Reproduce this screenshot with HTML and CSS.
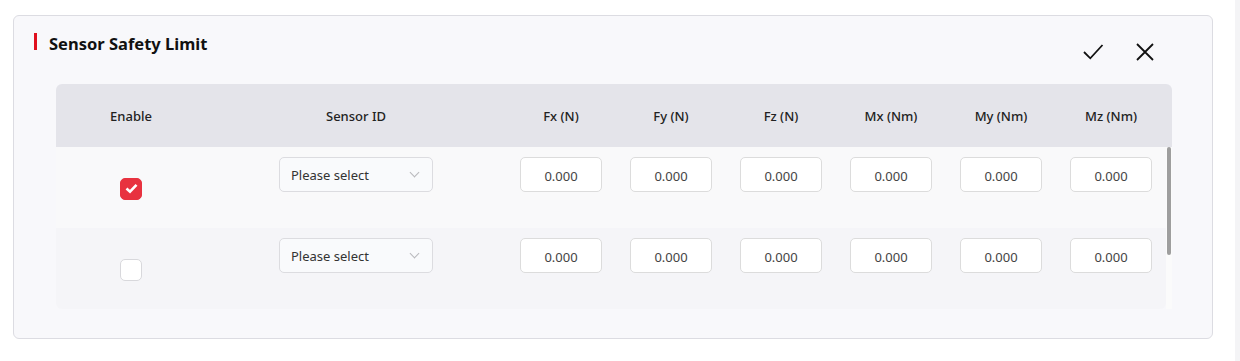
FILE: index.html
```html
<!DOCTYPE html>
<html>
<head>
  <meta charset="UTF-8">
  <title>Sensor Safety Limit</title>
  <link rel="stylesheet" href="styles.css">
</head>
<body>
  <div class="page">
    <div class="panel">
      <div class="panel-head">
        <h2 class="title">Sensor Safety Limit</h2>
        <div class="actions">
          <button class="icon-btn" title="Save">
            <svg width="22" height="22" viewBox="0 0 22 22"><path d="M2 11 L8.3 17.3 L20.5 4" fill="none" stroke="#111" stroke-width="1.8"/></svg>
          </button>
          <button class="icon-btn" title="Cancel">
            <svg width="22" height="22" viewBox="0 0 22 22"><path d="M3 3 L19 19 M19 3 L3 19" fill="none" stroke="#111" stroke-width="1.8"/></svg>
          </button>
        </div>
      </div>

      <div class="table">
        <div class="thead">
          <div class="th">Enable</div>
          <div class="th">Sensor ID</div>
          <div class="th">Fx (N)</div>
          <div class="th">Fy (N)</div>
          <div class="th">Fz (N)</div>
          <div class="th">Mx (Nm)</div>
          <div class="th">My (Nm)</div>
          <div class="th">Mz (Nm)</div>
        </div>
        <div class="tbody">
          <div class="rows">
            <div class="row">
              <div class="td td-check"><span class="check on"><svg width="13" height="11" viewBox="0 0 13 11"><path d="M1.5 5.5 L5 8.7 L11.5 1.8" fill="none" stroke="#fff" stroke-width="2.6"/></svg></span></div>
              <div class="td"><div class="select">Please select<span class="chev"></span></div></div>
              <div class="td"><input class="num" value="0.000"></div>
              <div class="td"><input class="num" value="0.000"></div>
              <div class="td"><input class="num" value="0.000"></div>
              <div class="td"><input class="num" value="0.000"></div>
              <div class="td"><input class="num" value="0.000"></div>
              <div class="td"><input class="num" value="0.000"></div>
            </div>
            <div class="row alt">
              <div class="td td-check"><span class="check"></span></div>
              <div class="td"><div class="select">Please select<span class="chev"></span></div></div>
              <div class="td"><input class="num" value="0.000"></div>
              <div class="td"><input class="num" value="0.000"></div>
              <div class="td"><input class="num" value="0.000"></div>
              <div class="td"><input class="num" value="0.000"></div>
              <div class="td"><input class="num" value="0.000"></div>
              <div class="td"><input class="num" value="0.000"></div>
            </div>
          </div>
          <div class="scroll"><div class="thumb"></div></div>
        </div>
      </div>
    </div>
    <div class="side"></div>
  </div>
</body>
</html>
```

FILE: styles.css
```css
body {
  margin: 0;
  background: #fff;
  font-family: 'Noto Sans', 'Open Sans', sans-serif;
  color: #222;
}
.page {
  display: flex;
  height: 361px;
}
.panel {
  margin: 15px 0 0 13px;
  width: 1198px;
  height: 322px;
  border: 1px solid #dcdce2;
  border-radius: 6px;
  background: #f8f8fb;
}
.side {
  margin-left: 22px;
  width: 5px;
  background: #f4f4f6;
}
.panel-head {
  display: flex;
  justify-content: space-between;
  padding: 17px 56px 0 20px;
  height: 51px;
}
.title {
  margin: 0;
  height: 17px;
  padding-left: 12px;
  border-left: 3px solid #e0101e;
  font-size: 16.5px;
  font-weight: bold;
  line-height: 21px;
  color: #111;
}
.actions {
  display: flex;
  gap: 30px;
  padding-top: 8px;
}
.icon-btn {
  padding: 0;
  border: none;
  background: none;
  width: 22px;
  height: 22px;
  cursor: pointer;
}
.table {
  margin-left: 42px;
  width: 1116px;
}
.thead {
  display: grid;
  grid-template-columns: 150px 300px repeat(6, 110px) 6px;
  height: 63px;
  background: #e4e4ea;
  border-radius: 6px 6px 0 0;
}
.th {
  display: flex;
  align-items: center;
  justify-content: center;
  font-size: 13px;
  font-weight: 500;
  color: #222;
}
.tbody {
  display: flex;
}
.rows {
  width: 1110px;
}
.row {
  display: grid;
  grid-template-columns: 150px 300px repeat(6, 110px);
  height: 81px;
  background: #f9f9fa;
}
.row.alt {
  background: #f5f5f8;
  border-radius: 0 0 6px 6px;
}
.td {
  display: flex;
  justify-content: center;
  padding-top: 10px;
}
.td-check {
  padding-top: 0;
  align-items: center;
}
.check {
  display: flex;
  align-items: center;
  justify-content: center;
  width: 20px;
  height: 20px;
  margin-top: 2px;
  border: 1px solid #d8d8dc;
  border-radius: 5px;
  background: #fff;
}
.check.on {
  border-color: #e8323f;
  background: #e8323f;
}
.select {
  position: relative;
  box-sizing: border-box;
  width: 154px;
  height: 35px;
  padding: 1px 11px 0;
  border: 1px solid #dcdce0;
  border-radius: 5px;
  background: #f9fafc;
  font-size: 13px;
  line-height: 33px;
  color: #333;
}
.chev {
  position: absolute;
  right: 14px;
  top: 11px;
  width: 6px;
  height: 6px;
  border-right: 1px solid #b8b8bc;
  border-bottom: 1px solid #b8b8bc;
  transform: rotate(45deg);
}
.num {
  box-sizing: border-box;
  width: 82px;
  height: 35px;
  margin: 0;
  padding: 3px 0 0;
  border: 1px solid #dcdcdc;
  border-radius: 5px;
  background: #fff;
  font-family: 'Noto Sans', 'Open Sans', sans-serif;
  font-size: 13px;
  color: #444;
  text-align: center;
  outline: none;
}
.scroll {
  width: 6px;
  height: 162px;
  background: #fbfbfb;
}
.thumb {
  margin-left: 1px;
  width: 4px;
  height: 108px;
  border-radius: 2px;
  background: #9e9e9e;
}
```
